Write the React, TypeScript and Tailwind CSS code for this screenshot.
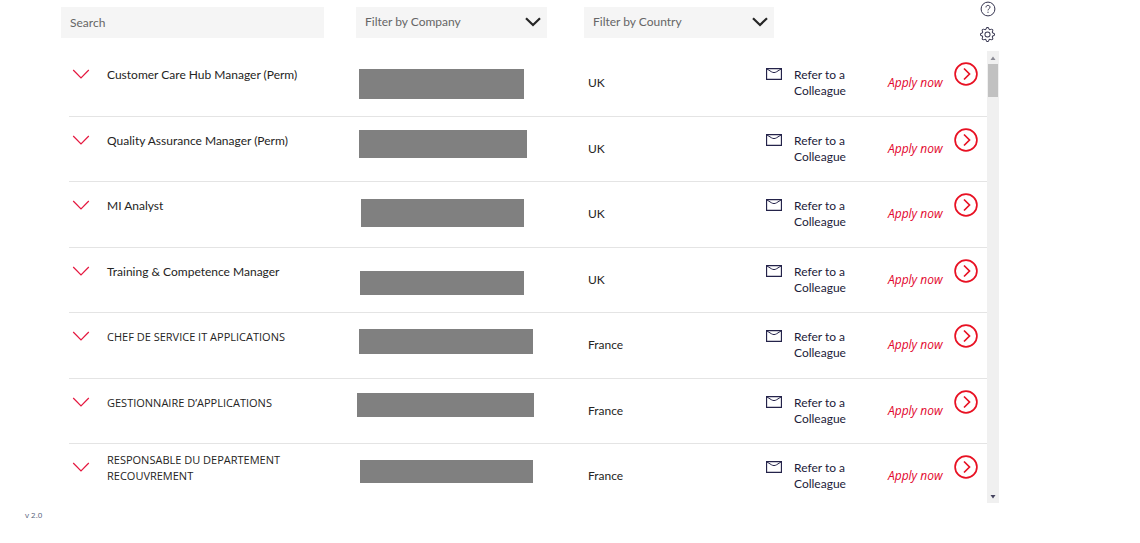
import { BsGear } from "react-icons/bs";

type Job = { title: string; country: string; bar: string };

const jobs: Job[] = [
  { title: "Customer Care Hub Manager (Perm)", country: "UK", bar: "mt-[18px] ml-[3px] w-[165px] h-[30px]" },
  { title: "Quality Assurance Manager (Perm)", country: "UK", bar: "mt-[13px] ml-[3px] w-[168px] h-[28px]" },
  { title: "MI Analyst", country: "UK", bar: "mt-[17px] ml-[5px] w-[163px] h-[28px]" },
  { title: "Training & Competence Manager", country: "UK", bar: "mt-[23px] ml-[4px] w-[164px] h-[24px]" },
  { title: "CHEF DE SERVICE IT APPLICATIONS", country: "France", bar: "mt-[16px] ml-[3px] w-[174px] h-[25px]" },
  { title: "GESTIONNAIRE D’APPLICATIONS", country: "France", bar: "mt-[14px] ml-[1px] w-[177px] h-[24px]" },
  { title: "RESPONSABLE DU DEPARTEMENT RECOUVREMENT", country: "France", bar: "mt-[16px] ml-[4px] w-[173px] h-[23px]" },
];

function Filter({ label, className }: { label: string; className: string }) {
  return (
    <div className={`relative shrink-0 ${className}`}>
      <select
        aria-label={label}
        className="block h-[31px] w-full appearance-none bg-[#f5f5f5] pb-[2px] pl-[9px] text-xs text-[#666666] outline-none"
      >
        <option>{label}</option>
      </select>
      <svg viewBox="0 0 16 10" className="pointer-events-none absolute top-[10px] right-[6px] h-[10px] w-4" fill="none" stroke="#262626" strokeWidth="2.2">
        <path d="M1 1.2 8 8l7-6.8" />
      </svg>
    </div>
  );
}

function JobRow({ job }: { job: Job }) {
  const capitals = job.title === job.title.toUpperCase();
  return (
    <tr className="align-top odd:h-[66px] even:h-[65px] last:h-[59px]! [&>td]:border-b [&>td]:border-[#e4e4e4] last:[&>td]:border-b-0">
      <td className="p-0">
        <button type="button" aria-label={`Show details of ${job.title}`} className="mt-[17px] ml-[3px] block">
          <svg viewBox="0 0 18 12" className="h-3 w-[18px]" fill="none" stroke="#e5173f" strokeWidth="1.2">
            <path d="M1.2 2 9 10l7.8-8" />
          </svg>
        </button>
      </td>
      <td className="p-0">
        <div
          className={`flex h-12 items-center pr-12 leading-4 ${
            capitals ? "font-['Open_Sans',sans-serif] text-[11px]" : ""
          }`}
        >
          {job.title}
        </div>
      </td>
      <td className="p-0">
        <div className={`bg-[#808080] ${job.bar}`} />
      </td>
      <td className="p-0 pt-6 leading-4">{job.country}</td>
      <td className="p-0">
        <a href="#refer" className="mt-4 flex gap-3 leading-4 text-[#1c1b3a]">
          <svg viewBox="0 0 16 12" className="mt-[1px] h-3 w-4 shrink-0" fill="none" stroke="#24234a">
            <path d="M.5.5h15v11H.5z" strokeWidth="1.3" />
            <path d="M1 1l4.500 2.800c1.600 1 3.400 1 5 0L15 1" />
          </svg>
          <span className="w-16">Refer to a Colleague</span>
        </a>
      </td>
      <td className="p-0">
        <a href="#apply" className="flex justify-between pr-[9px] text-[#e2062c]">
          <span className="pt-6 font-['Open_Sans',sans-serif] leading-4 italic">Apply now</span>
          <svg viewBox="0 0 24 24" className="mt-[11px] size-6" fill="none" stroke="#e81123" strokeWidth="1.7">
            <circle cx="12" cy="12" r="10.900" />
            <path d="m10 6.500 5.500 5.500-5.500 5.500" />
          </svg>
        </a>
      </td>
    </tr>
  );
}

export default function App() {
  return (
    <div className="bg-white font-['Lato',sans-serif] text-xs text-[#252423]">
      <main className="mr-[141px] ml-[61px]">
        <header className="flex h-[51px] items-start">
          <input
            type="search"
            aria-label="Search"
            placeholder="Search"
            className="mt-[7px] mr-8 h-[31px] min-w-0 flex-1 bg-[#f5f5f5] px-[9px] outline-none placeholder:text-[#666666]"
          />
          <Filter label="Filter by Company" className="mt-[7px] mr-[37px] w-[191px]" />
          <Filter label="Filter by Country" className="mt-[7px] mr-[206px] w-[190px]" />
          <div className="flex w-[19px] shrink-0 flex-col gap-[10px] pt-[1px]">
            <button type="button" aria-label="Help">
              <svg viewBox="0 0 16 16" className="size-4" fill="none" stroke="#35344f">
                <circle cx="8" cy="8" r="6.900" />
                <path d="M6 6.400C6 5 6.900 4.400 8 4.400s2 .7 2 1.800c0 1.500-2 1.500-2 3.200M8 10.700v1.200" />
              </svg>
            </button>
            <button type="button" aria-label="Settings">
              <BsGear className="size-[15px] text-[#35344f]" />
            </button>
          </div>
        </header>
        <section className="flex pl-2" aria-label="Vacancies">
          <table className="min-w-0 flex-1 table-fixed border-separate border-spacing-0">
            <colgroup>
              <col className="w-[38px]" />
              <col />
              <col className="w-[232px]" />
              <col className="w-[178px]" />
              <col className="w-[122px]" />
              <col className="w-[99px]" />
            </colgroup>
            <tbody>
              {jobs.map((job) => (
                <JobRow key={job.title} job={job} />
              ))}
            </tbody>
          </table>
          <div aria-hidden="true" className="flex w-3 flex-col items-center bg-[#f0f0f0]">
            <svg viewBox="0 0 12 13" className="h-[13px] w-3" fill="#8a8a94">
              <path d="M3.500 9 6 5.500 8.500 9z" />
            </svg>
            <div className="h-[33px] w-[10px] bg-[#c1c1c1]" />
            <svg viewBox="0 0 12 13" className="mt-auto h-[13px] w-3" fill="#45445f">
              <path d="M3.500 5 6 8.500 8.500 5z" />
            </svg>
          </div>
        </section>
      </main>
      <footer className="pt-[6px] pl-[25px] font-['Open_Sans',sans-serif] text-[8px] leading-3 text-[#55617a]">v 2.0</footer>
    </div>
  );
}
